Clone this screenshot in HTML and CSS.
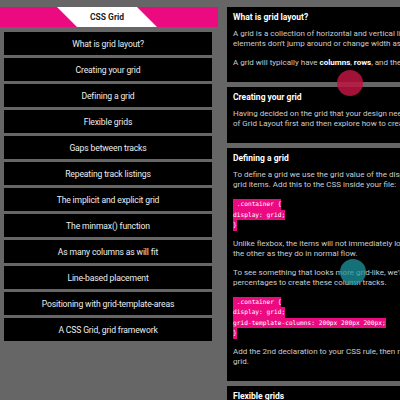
FILE: index.html
```html
<!DOCTYPE html>
<html lang="en">
<head>
<meta charset="utf-8">
<title>CSS Grid</title>
<link rel="stylesheet" href="styles.css">
</head>
<body>
<div class="page">
  <aside class="sidebar">
    <header class="brand"><div class="tab">CSS Grid</div></header>
    <nav class="menu">
      <a class="item">What is grid layout?</a>
      <a class="item">Creating your grid</a>
      <a class="item">Defining a grid</a>
      <a class="item">Flexible grids</a>
      <a class="item">Gaps between tracks</a>
      <a class="item">Repeating track listings</a>
      <a class="item">The implicit and explicit grid</a>
      <a class="item">The minmax() function</a>
      <a class="item">As many columns as will fit</a>
      <a class="item">Line-based placement</a>
      <a class="item">Positioning with grid-template-areas</a>
      <a class="item">A CSS Grid, grid framework</a>
    </nav>
  </aside>
  <main class="content">
    <section class="card">
      <h2>What is grid layout?</h2>
      <p>A grid is a collection of horizontal and vertical lines creating a pattern against which we can line up our design<br>elements don't jump around or change width as we move from page to page, providing greater consistency on our websites.</p>
      <p>A grid will typically have <b>columns</b>, <b>rows</b>, and then gaps between each row and column — commonly referred to as gutters.</p>
    </section>
    <section class="card">
      <h2>Creating your grid</h2>
      <p>Having decided on the grid that your design needs, you can use CSS Grid Layout to create it. We'll look at the basic features<br>of Grid Layout first and then explore how to create a simple grid system for your project.</p>
    </section>
    <section class="card">
      <h2>Defining a grid</h2>
      <p>To define a grid we use the grid value of the display property. As with Flexbox, this enables Grid Layout, and all of the direct<br>grid items. Add this to the CSS inside your file:</p>
      <pre class="code"><span class="ln"> .container {</span><span class="ln">display: grid;</span><span class="ln">}</span></pre>
      <p>Unlike flexbox, the items will not immediately look any different. Declaring display: grid gives you a one column grid, so your<br>the other as they do in normal flow.</p>
      <p>To see something that looks more grid-like, we'll need to add some columns to the grid. Let's add three 200-pixel columns.<br>percentages to create these column tracks.</p>
      <pre class="code"><span class="ln"> .container {</span><span class="ln">display: grid;</span><span class="ln">grid-template-columns: 200px 200px 200px;</span><span class="ln">}</span></pre>
      <p>Add the 2nd declaration to your CSS rule, then reload the page, and you should see that the items have rearranged themselves<br>grid.</p>
    </section>
    <section class="card">
      <h2>Flexible grids</h2>
      <p>So far, we have created a grid which uses fixed widths for the tracks.</p>
    </section>
  </main>
</div>
<span class="touch touch-red"></span>
<span class="touch touch-teal"></span>
</body>
</html>
```
FILE: styles.css
```css
html, body {
  margin: 0;
  padding: 0;
  width: 400px;
  height: 400px;
  overflow: hidden;
  background: #666666;
  font-family: Roboto, "Noto Sans", sans-serif;
}

.page {
  display: flex;
  gap: 9px;
  padding-top: 7px;
  width: 760px;
}

.sidebar {
  flex: none;
  width: 218px;
}

.brand {
  height: 20px;
  background: #eb0a80;
  display: flex;
  justify-content: center;
}

.tab {
  width: 100px;
  height: 20px;
  margin-right: 4px;
  background: #ffffff;
  clip-path: polygon(0 0, 80% 0, 100% 100%, 20% 100%);
  display: flex;
  align-items: center;
  justify-content: center;
  font-size: 8.5px;
  font-weight: 700;
  color: #222222;
}

.menu {
  display: flex;
  flex-direction: column;
  gap: 3px;
  padding: 5px 6px 0 4px;
}

.item {
  height: 23px;
  background: #000000;
  color: #eeeeee;
  display: flex;
  align-items: center;
  justify-content: center;
  font-size: 8.6px;
  letter-spacing: -0.15px;
}

.content {
  flex: none;
  width: 520px;
  display: flex;
  flex-direction: column;
  gap: 5px;
}

.card {
  background: #000000;
  padding: 5px 6px 5px;
  color: #cccccc;
  font-size: 8px;
  line-height: 10px;
}

.card h2 {
  margin: 0 0 7px;
  font-size: 8.5px;
  line-height: 10px;
  font-weight: 700;
  color: #ffffff;
}

.card p {
  margin: 0 0 9px;
  white-space: nowrap;
}

.card b {
  color: #ffffff;
  font-weight: 700;
}

.code {
  margin: 0 0 8px;
  font-family: "DejaVu Sans Mono", "Liberation Mono", monospace;
  font-size: 6.2px;
  line-height: 10.5px;
  color: #ffffff;
}

.ln {
  display: block;
  width: fit-content;
  background: #eb0a80;
  white-space: pre;
}

.touch {
  position: absolute;
  width: 26px;
  height: 26px;
  border-radius: 50%;
}

.touch-red {
  left: 337px;
  top: 70px;
  background: rgba(190, 20, 65, 0.85);
}

.touch-teal {
  left: 340px;
  top: 259px;
  background: rgba(30, 150, 160, 0.75);
}
```
